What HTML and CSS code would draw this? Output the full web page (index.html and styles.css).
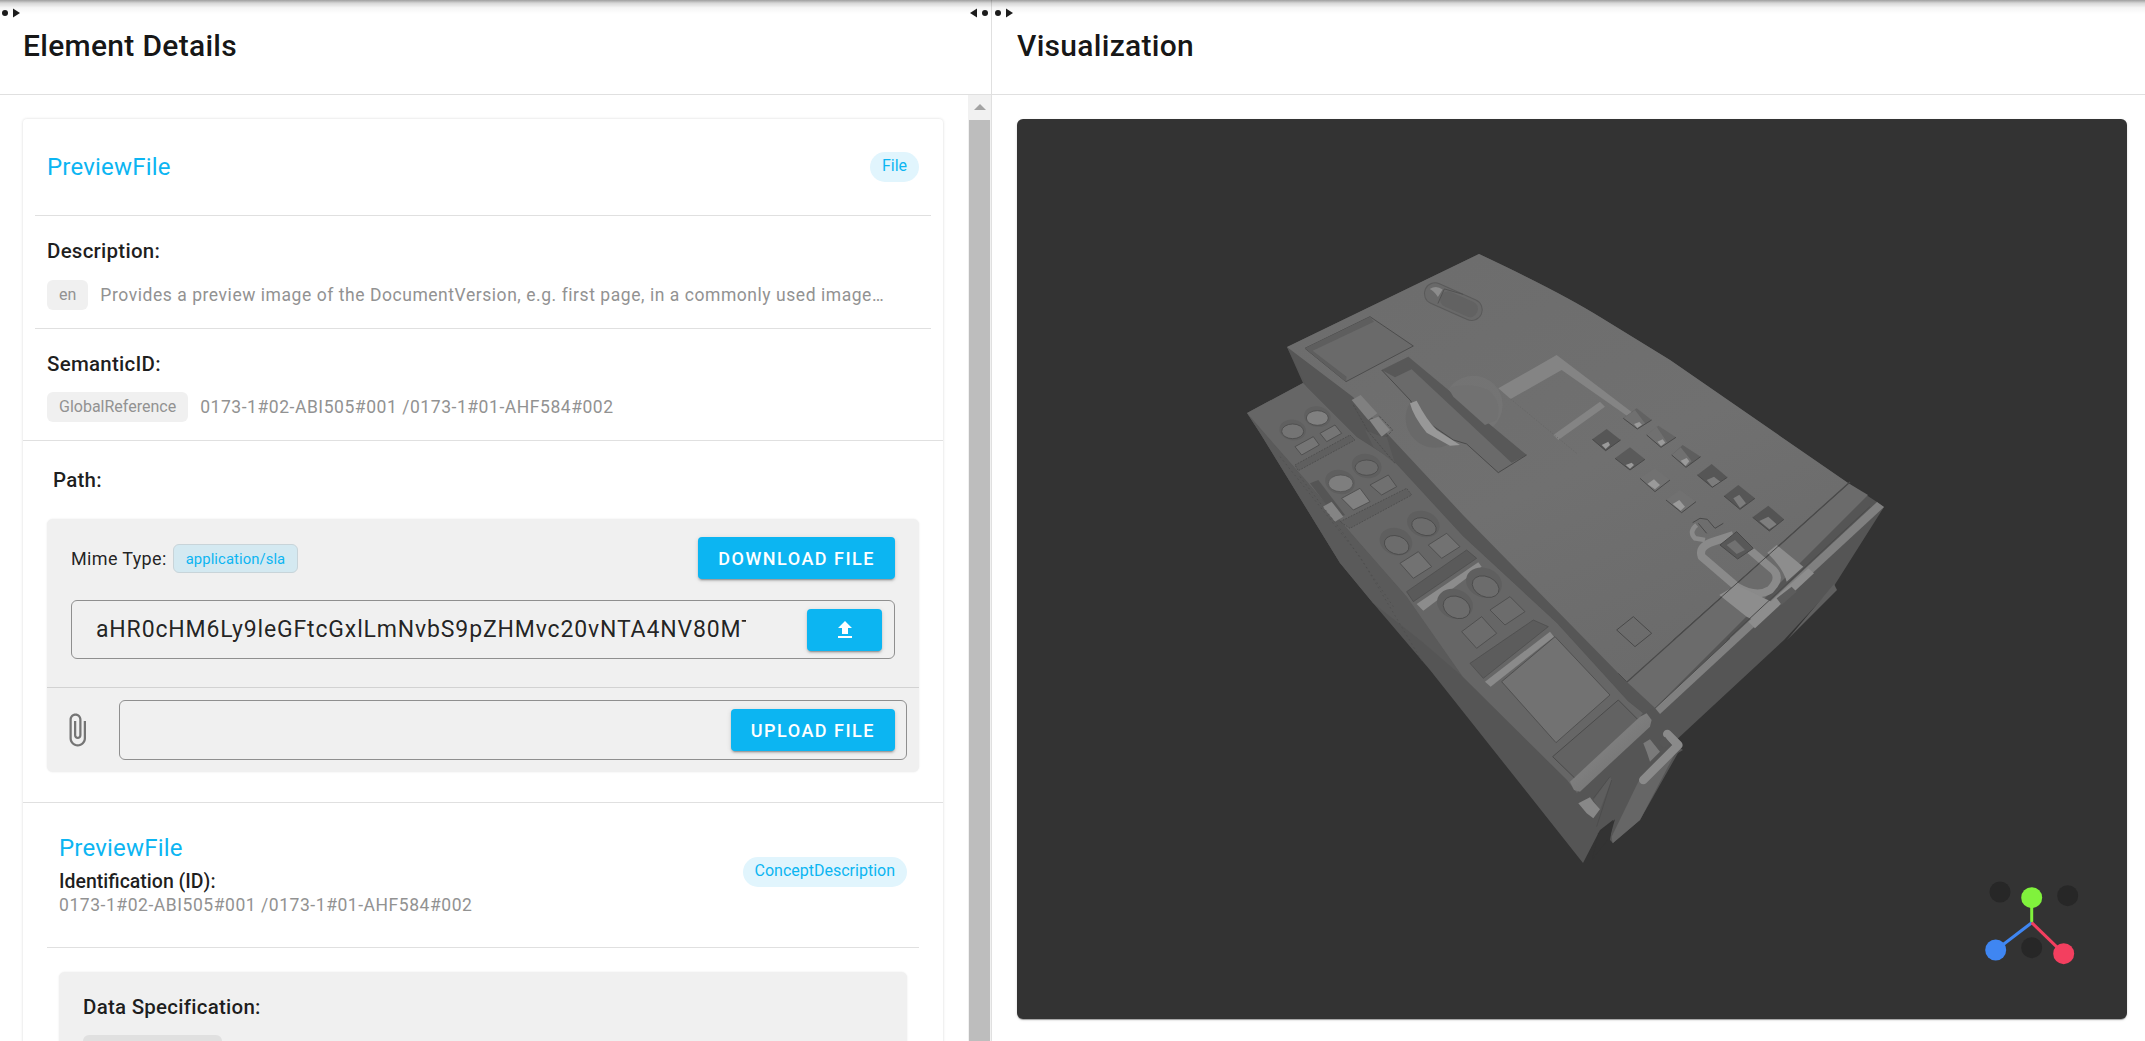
FILE: index.html
```html
<!DOCTYPE html>
<html lang="en">
<head>
<meta charset="utf-8">
<title>Element Details</title>
<link rel="stylesheet" href="styles.css">
</head>
<body>
<div class="topshade"></div>
<main class="app">
  <section class="panel panel-left">
    <header class="panel-head"><h1>Element Details</h1></header>
    <div class="left-body">
      <div class="scroller">
        <article class="card">
          <div class="card-head">
            <h2 class="title">PreviewFile</h2>
            <span class="pill">File</span>
          </div>
          <div class="field inset">
            <h3 class="label">Description:</h3>
            <div class="value-row">
              <span class="tag">en</span>
              <span class="muted ellipsis">Provides a preview image of the DocumentVersion, e.g. first page, in a commonly used image format and low resolution.</span>
            </div>
          </div>
          <div class="field inset">
            <h3 class="label">SemanticID:</h3>
            <div class="value-row">
              <span class="tag">GlobalReference</span>
              <span class="muted">0173-1#02-ABI505#001 /0173-1#01-AHF584#002</span>
            </div>
          </div>
          <div class="full-rule"></div>
          <div class="path-section">
            <h3 class="label path-label">Path:</h3>
            <div class="filebox">
              <div class="mime-row">
                <span class="mime-label">Mime Type:</span>
                <span class="mime-chip">application/sla</span>
                <button class="btn btn-push">DOWNLOAD FILE</button>
              </div>
              <div class="file-input">
                <span class="file-value">aHR0cHM6Ly9leGFtcGxlLmNvbS9pZHMvc20vNTA4NV80MT</span>
                <button class="btn btn-icon" aria-label="Upload">
                  <svg class="upload-icon" viewBox="0 0 24 24"><path d="M9 16h6v-6h4l-7-7-7 7h4zm-4 2h14v2H5z"/></svg>
                </button>
              </div>
              <div class="upload-row">
                <svg class="clip-icon" viewBox="0 0 24 24"><path d="M16.5 6v11.5c0 2.21-1.79 4-4 4s-4-1.79-4-4V5c0-1.38 1.12-2.5 2.5-2.5s2.5 1.12 2.5 2.5v10.5c0 .55-.45 1-1 1s-1-.45-1-1V6H10v9.5c0 1.38 1.12 2.5 2.5 2.5s2.5-1.12 2.5-2.5V5c0-2.21-1.79-4-4-4S7 2.79 7 5v12.5c0 3.04 2.46 5.5 5.5 5.5s5.5-2.46 5.5-5.5V6h-1.5z"/></svg>
                <div class="upload-input">
                  <button class="btn">UPLOAD FILE</button>
                </div>
              </div>
            </div>
          </div>
          <div class="full-rule"></div>
          <div class="concept">
            <div class="concept-head">
              <div>
                <h2 class="title">PreviewFile</h2>
                <h3 class="id-label">Identification (ID):</h3>
                <span class="muted id-value">0173-1#02-ABI505#001 /0173-1#01-AHF584#002</span>
              </div>
              <span class="pill">ConceptDescription</span>
            </div>
            <div class="specbox">
              <h3 class="label">Data Specification:</h3>
              <span class="spec-chip"></span>
            </div>
          </div>
        </article>
      </div>
      <div class="scrollbar">
        <div class="scroll-btn"><span class="scroll-arrow"></span></div>
        <div class="scroll-thumb"></div>
      </div>
    </div>
  </section>
  <section class="panel panel-right">
    <header class="panel-head"><h1>Visualization</h1></header>
    <div class="viewer">
      <svg class="scene" viewBox="1017 119 1110 900" xmlns="http://www.w3.org/2000/svg">
        <defs>
          <linearGradient id="rod" x1="0" y1="0" x2="1" y2="1">
            <stop offset="0" stop-color="#8c8c8c"/><stop offset="1" stop-color="#6c6c6c"/>
          </linearGradient>
          <linearGradient id="plate" x1="0" y1="0" x2="0.6" y2="1">
            <stop offset="0" stop-color="#6c6c6c"/><stop offset=".6" stop-color="#707070"/><stop offset="1" stop-color="#6b6b6b"/>
          </linearGradient>
        </defs>
        <!-- body silhouette -->
        <path fill="#555" d="M1479 254 Q1560 292 1600 317 L1670 360 L1848 483 L1877 502 L1884 507 L1834 586 L1784 640 L1673 743 L1683 750 L1678 753 L1640 820 L1613 843 L1610 840 L1613 820 L1600 830 L1583 863 L1430 670 L1373 603 L1340 563 L1260 433 L1247 413 L1303 383 L1287 347 Z"/>
        <path fill="#5f5f5f" d="M1837 590 L1834 584 L1787 640 Z"/>
        <!-- side face next to terminals -->
        <path fill="#5a5a5a" d="M1247 413 L1260 428 L1303 477 L1357 540 L1407 597 L1467 667 L1463 677 L1420 640 L1373 603 L1340 563 L1260 433 Z"/>
        <!-- terminal face -->
        <path fill="#666" d="M1247 413 L1303 383 L1307 387 L1357 437 L1393 460 L1463 536 L1557 623 L1628 701 L1643 713 L1577 793 L1567 780 L1463 677 L1407 597 L1357 540 L1303 477 L1260 428 Z"/>
        <!-- dark band -->
        <path fill="#565656" d="M1287 347 L1353 397 L1463 515 L1557 601 L1628 680 L1655 708 L1643 713 L1628 701 L1557 623 L1463 536 L1393 460 L1357 437 L1307 387 Z"/>
        <!-- top plate -->
        <path fill="url(#plate)" d="M1479 254 Q1560 292 1600 317 L1670 360 L1848 483 L1627 682 L1463 515 L1353 397 L1287 347 Z"/>
        <!-- lower strip -->
        <path fill="#6b6b6b" d="M1627 682 L1848 483 L1868 495 L1655 708 Z"/>
        <path fill="#808080" d="M1655 708 L1877 502 L1884 507 L1660 714 Z"/>
        <path fill="none" stroke="#4a4a4a" stroke-width="1.2" d="M1627 682 L1850 482"/>

        <!-- features from top-left of the plate -->
        <g transform="translate(1240 240) scale(.3333)">
          <path fill="#6a6a6a" stroke="#4c4c4c" stroke-width="3" d="M195 325 L390 230 L520 318 L318 425 Z"/>
          <path fill="#5e5e5e" d="M195 325 L390 230 L402 245 L218 332 Z M195 325 L218 332 L320 410 L318 425 Z"/>
          <!-- oval -->
          <g transform="translate(640 185) rotate(24)">
            <rect x="-92" y="-32" width="184" height="64" rx="32" fill="#696969" stroke="#5a5a5a" stroke-width="3"/>
            <rect x="-40" y="-24" width="118" height="48" rx="22" fill="#626262"/>
            <path fill="#8c8c8c" d="M-80 -6 Q-68 -26 -44 -20 L-48 6 Q-66 -6 -80 -6 Z"/>
            <path fill="none" stroke="#505050" stroke-width="2.5" d="M-40 24 L-40 -24 L18 -32"/>
          </g>
          <!-- spheres -->
          <circle cx="700" cy="495" r="88" fill="#777" opacity=".65"/>
          <circle cx="585" cy="535" r="88" fill="#696969"/>
          <!-- slot -->
          <path fill="#6a6a6a" d="M425 390 L505 350 L860 645 L775 698 L680 612 L640 600 L560 540 L510 480 Z"/>
          <path fill="#585858" d="M425 390 L505 350 L860 645 L815 668 L515 388 L465 412 Z"/>
          <path fill="none" stroke="#4a4a4a" stroke-width="3" d="M425 390 L510 480 Q545 530 560 545 L640 600 L680 612 L775 698 L860 645"/>
          <path fill="#989898" d="M510 490 L530 482 Q560 540 590 570 L660 615 L630 617 L560 578 Q520 530 510 490 Z"/>
          <path fill="#717171" d="M625 445 Q680 425 745 450 Q790 490 770 540 L735 555 L640 470 Z"/>
          <!-- frame -->
          <path fill="#848484" d="M775 445 L950 345 L1180 520 L1175 540 L1165 530 L965 390 L812 477 Z"/>
          <path fill="#848484" d="M1080 485 L1095 500 L955 600 L940 585 Z"/>
          <!-- dotted edge -->
          <path fill="none" stroke="#626262" stroke-width="2" stroke-dasharray="4 5" d="M812 477 L1010 640"/>
          <!-- small block at plate edge -->
          <path fill="#808080" d="M335 480 L362 465 L412 520 L385 540 Z"/>
          <path fill="#868686" d="M388 540 L415 530 L450 570 L425 590 Z"/>
          <path fill="#5c5c5c" d="M375 570 L425 590 L440 590 L465 670 L400 620 Z"/>
          <path fill="none" stroke="#4a4a4a" stroke-width="2.5" stroke-dasharray="7 4" d="M340 495 L385 575 L465 670 M440 590 L458 570 L415 525"/>
        </g>

        <!-- status squares and loop -->
        <g transform="translate(1560 360) scale(.3333)">
          <g>
            <path fill="#626262" d="M190 175 L230 145 L275 180 L232 207 Z"/>
            <path fill="#646464" d="M260 225 L295 197 L348 232 L303 262 Z"/>
            <path fill="#5e5e5e" d="M335 285 L368 255 L422 290 L378 322 Z"/>
            <path fill="#565656" d="M412 345 L455 312 L502 352 L457 382 Z"/>
            <path fill="#565656" d="M492 408 L535 375 L585 415 L540 448 Z"/>
            <path fill="#545454" d="M578 472 L625 437 L672 478 L628 513 Z"/>
            <path fill="#565656" d="M97 238 L140 207 L182 240 L137 272 Z"/>
            <path fill="#5a5a5a" d="M165 295 L210 262 L255 298 L210 330 Z"/>
            <path fill="#717171" d="M240 355 L285 325 L330 360 L285 395 Z"/>
            <path fill="#717171" d="M318 420 L360 390 L408 425 L365 458 Z"/>
          </g>
          <g fill="#707070">
            <path d="M190 175 L225 150 L255 190 L232 207 Z"/>
            <path d="M260 225 L290 200 L322 248 L303 262 Z"/>
            <path d="M335 285 L362 262 L395 303 L378 322 Z"/>
          </g>
          <g fill="#9a9a9a">
            <path d="M222 192 L238 186 L246 194 L232 204 Z"/>
            <path d="M292 245 L308 238 L316 248 L303 258 Z"/>
            <path d="M362 302 L380 294 L388 304 L376 318 Z"/>
            <path d="M125 255 L145 245 L150 255 L137 267 Z"/>
            <path d="M197 315 L215 308 L222 315 L210 326 Z"/>
            <path d="M262 372 L282 358 L300 375 L285 388 Z"/>
            <path d="M338 432 L358 420 L375 440 L362 452 Z"/>
            <path fill="#7c7c7c" d="M440 360 L462 350 L482 366 L457 380 Z"/>
            <path fill="#7c7c7c" d="M520 415 L538 404 L558 430 L540 444 Z"/>
            <path fill="#7e7e7e" d="M598 483 L625 470 L650 493 L628 508 Z"/>
          </g>
          <g fill="none" stroke="#484848" stroke-width="3">
            <path d="M190 175 L232 207 L275 180 M260 225 L303 262 L348 232 M335 285 L378 322 L422 290"/>
            <path d="M412 345 L457 382 L502 352 M492 408 L540 448 L585 415 M578 472 L628 513 L672 478"/>
            <path d="M97 238 L137 272 L182 240 M165 295 L210 330 L255 298"/>
            <path d="M240 355 L285 395 L330 360 M318 420 L365 458 L408 425"/>
            <path d="M398 488 L420 475 L442 478 L465 505 L490 490 M415 490 L440 520"/>
            <path d="M170 810 L220 770 L275 820 L225 860 Z"/>
          </g>
          <!-- loop -->
          <path fill="none" stroke="#8a8a8a" stroke-width="14" d="M410 495 Q385 515 405 535 L435 540"/>
          <path fill="none" stroke="#8a8a8a" stroke-width="24" stroke-linejoin="round" d="M520 525 L460 545 Q415 560 425 590 L530 680 Q590 715 630 690 Q665 655 640 630 L570 570"/>
          <path fill="#8d8d8d" d="M478 705 L530 675 L655 735 L640 745 L600 790 L560 770 Z"/>
          <path fill="#8d8d8d" d="M622 578 L650 555 L730 620 L680 665 Q670 625 622 578 Z"/>
          <path fill="#8d8d8d" d="M565 785 L745 625 L762 640 L585 805 Z"/>
          <path fill="#5c5c5c" d="M650 715 L695 680 L710 695 L665 735 Z"/>
          <path fill="#585858" stroke="#484848" stroke-width="3" d="M480 555 L530 515 L580 565 L533 597 Z"/>
          <path fill="#717171" d="M500 555 L525 540 L555 570 L530 582 Z"/>
          <path fill="none" stroke="#4a4a4a" stroke-width="3" d="M340 840 L864 372 M500 840 L930 440"/>
        </g>

        <!-- terminals -->
        <g transform="translate(1260 400) scale(.3333)" class="terminals">
          <!-- block 1 -->
          <ellipse cx="98" cy="90" rx="40" ry="31" transform="rotate(10 98 90)" fill="#606060"/>
          <ellipse cx="172" cy="50" rx="40" ry="31" transform="rotate(10 172 50)" fill="#606060"/>
          <ellipse cx="98" cy="94" rx="33" ry="22" fill="#747474" stroke="#4a4a4a" stroke-width="2.5"/>
          <ellipse cx="172" cy="54" rx="33" ry="22" fill="#808080" stroke="#4a4a4a" stroke-width="2.5"/>
          <path fill="#757575" stroke="#4a4a4a" stroke-width="2.5" d="M105 140 L160 110 L178 135 L125 165 Z"/>
          <path fill="#757575" stroke="#4a4a4a" stroke-width="2.5" d="M180 100 L225 75 L245 100 L200 125 Z"/>
          <path fill="#5f5f5f" stroke="#4a4a4a" stroke-width="2.5" stroke-dasharray="5 4" d="M105 195 L270 105 L285 120 L115 212 Z"/>
          <!-- block 2 -->
          <ellipse cx="240" cy="246" rx="45" ry="36" transform="rotate(15 240 246)" fill="#5f5f5f"/>
          <ellipse cx="320" cy="198" rx="45" ry="36" transform="rotate(15 320 198)" fill="#5f5f5f"/>
          <ellipse cx="242" cy="250" rx="37" ry="25" fill="#7e7e7e" stroke="#4e4e4e" stroke-width="2"/>
          <ellipse cx="320" cy="203" rx="35" ry="23" fill="#6c6c6c" stroke="#4a4a4a" stroke-width="2.5"/>
          <path fill="#808080" stroke="#4a4a4a" stroke-width="2.5" d="M245 295 L300 265 L330 305 L280 330 Z"/>
          <path fill="#707070" stroke="#4a4a4a" stroke-width="2.5" d="M330 255 L385 225 L410 260 L365 285 Z"/>
          <path fill="#5f5f5f" stroke="#4a4a4a" stroke-width="2.5" stroke-dasharray="5 4" d="M240 365 L440 265 L455 285 L270 385 Z"/>
          <path fill="#555" d="M150 250 L175 240 L255 345 L230 355 Z"/>
          <path fill="#848484" d="M188 320 L215 305 L250 350 L225 365 Z"/>
          <!-- block 3 -->
          <ellipse cx="408" cy="425" rx="50" ry="40" transform="rotate(20 408 425)" fill="#5f5f5f"/>
          <ellipse cx="490" cy="372" rx="50" ry="38" transform="rotate(20 490 372)" fill="#5f5f5f"/>
          <ellipse cx="410" cy="435" rx="38" ry="27" transform="rotate(20 410 435)" fill="#6c6c6c" stroke="#4a4a4a" stroke-width="2.5"/>
          <ellipse cx="492" cy="380" rx="38" ry="25" transform="rotate(20 492 380)" fill="#6c6c6c" stroke="#4a4a4a" stroke-width="2.5"/>
          <path fill="#727272" stroke="#4a4a4a" stroke-width="2.5" d="M420 490 L475 455 L515 500 L460 535 Z"/>
          <path fill="#727272" stroke="#4a4a4a" stroke-width="2.5" d="M505 435 L560 400 L600 440 L545 475 Z"/>
          <path fill="#5a5a5a" stroke="#4a4a4a" stroke-width="2" d="M440 575 L620 450 L650 475 L460 605 Z"/>
          <!-- light strip -->
          <path fill="#8c8c8c" d="M470 612 L655 487 L665 500 L490 632 Z"/>
          <!-- block 4 -->
          <ellipse cx="585" cy="612" rx="55" ry="44" transform="rotate(20 585 612)" fill="#5f5f5f"/>
          <ellipse cx="672" cy="548" rx="55" ry="44" transform="rotate(20 672 548)" fill="#5f5f5f"/>
          <ellipse cx="590" cy="622" rx="42" ry="32" transform="rotate(25 590 622)" fill="#6c6c6c" stroke="#4a4a4a" stroke-width="2.5"/>
          <ellipse cx="677" cy="560" rx="42" ry="30" transform="rotate(25 677 560)" fill="#6c6c6c" stroke="#4a4a4a" stroke-width="2.5"/>
          <path fill="#6c6c6c" stroke="#4a4a4a" stroke-width="2.5" d="M605 695 L665 650 L710 700 L650 745 Z"/>
          <path fill="#6c6c6c" stroke="#4a4a4a" stroke-width="2.5" d="M690 630 L750 590 L795 635 L735 675 Z"/>
          <path fill="none" stroke="#4c4c4c" stroke-width="2" stroke-dasharray="5 9" d="M60 170 L300 470 L490 790 M120 230 L250 400 L400 620"/>
        </g>

        <!-- front module, clips -->
        <g transform="translate(1430 620) scale(.3333)">
          <path fill="#5c5c5c" stroke="#4a4a4a" stroke-width="2" d="M120 130 L310 0 L355 20 L160 175 Z"/>
          <path fill="#727272" stroke="#4a4a4a" stroke-width="2.5" d="M215 185 L375 50 L540 225 L378 368 Z"/>
          <path fill="#8a8a8a" d="M165 185 L360 35 L372 50 L182 200 Z"/>
          <path fill="#626262" stroke="#4a4a4a" stroke-width="3" d="M368 410 L565 240 L625 300 L435 475 Z"/>
          <path fill="url(#rod)" d="M420 485 L630 290 L650 280 L665 300 L660 320 L450 515 L432 510 Z"/>
          <path fill="none" stroke="#4a4a4a" stroke-width="3" d="M590 185 L565 160 M675 265 L900 55"/>
          <path fill="none" stroke="#808080" stroke-width="3" d="M688 262 L900 62"/>
          <!-- left clip -->
          <path fill="#5e5e5e" d="M490 540 L540 470 L545 480 L510 570 Z"/>
          <path fill="#888" d="M445 550 L480 532 L490 545 L510 568 L490 595 L470 580 Z"/>
          <path fill="none" stroke="#484848" stroke-width="2" d="M540 470 L490 535 M545 480 L500 620"/>
          <!-- gap between clips -->
          <path fill="#333" d="M505 640 L555 598 L540 650 L486 720 Z"/>
          <!-- right clip -->
          <path fill="#666" d="M625 485 L738 395 L630 600 L548 670 L545 650 Z"/>
          <path fill="#7a7a7a" d="M640 370 L660 358 L690 395 L660 425 L650 395 Z"/>
          <path fill="none" stroke="#8a8a8a" stroke-width="26" stroke-linecap="round" stroke-linejoin="round" d="M712 342 L745 375 L640 480"/>
          <path fill="#565656" d="M685 365 L705 350 L722 372 L700 385 Z"/>
        </g>

        <!-- axis gizmo -->
        <g class="gizmo">
          <circle cx="2000" cy="892" r="10.5" fill="#272727"/>
          <circle cx="2067.7" cy="895.7" r="10.5" fill="#272727"/>
          <circle cx="2031.7" cy="947.7" r="10.5" fill="#272727"/>
          <path stroke="#80f23c" stroke-width="3" d="M2031.7 922.7 V897"/>
          <path stroke="#3f86f2" stroke-width="3" d="M2031.7 922.7 L1996 950"/>
          <path stroke="#f33f5f" stroke-width="3" d="M2031.7 922.7 L2063.7 953.7"/>
          <circle cx="2031.7" cy="897.7" r="10.5" fill="#80f23c"/>
          <circle cx="1995.7" cy="950" r="10.5" fill="#3f86f2"/>
          <circle cx="2063.7" cy="953.7" r="10.5" fill="#f33f5f"/>
        </g>
      </svg>
    </div>
  </section>
</main>
<svg class="handle handle-a" viewBox="0 0 20 10"><circle cx="5" cy="5" r="3"/><path d="M13 .5 L20 5 L13 9.5Z"/></svg>
<svg class="handle handle-b" viewBox="0 0 43 10"><path d="M7 .5 L0 5 L7 9.5Z"/><circle cx="15" cy="5" r="3"/><circle cx="28" cy="5" r="3"/><path d="M36 .5 L43 5 L36 9.5Z"/></svg>
</body>
</html>
```

FILE: styles.css
```css
* { box-sizing: border-box; }
html, body { margin: 0; height: 100%; overflow: hidden; background: #fff; }
body { font-family: Roboto, "Noto Sans", sans-serif; color: rgba(0,0,0,.87); }
h1, h2, h3 { margin: 0; }

.topshade {
  position: absolute; left: 0; right: 0; top: 0; height: 14px; z-index: 2; pointer-events: none;
  background: linear-gradient(to bottom, rgba(0,0,0,.38), rgba(0,0,0,.16) 22%, rgba(0,0,0,.04) 55%, rgba(0,0,0,0));
}
.handle { position: absolute; top: 8px; height: 10px; z-index: 3; fill: #1c1c1c; }
.handle-a { left: 0; width: 20px; }
.handle-b { left: 970px; width: 43px; }

.app { display: flex; height: 1041px; }
.panel { display: flex; flex-direction: column; height: 100%; }
.panel-left { width: 992px; border-right: 1px solid #e0e0e0; flex: none; }
.panel-right { flex: 1; min-width: 0; }
.panel-head {
  height: 95px; flex: none; border-bottom: 1px solid #e0e0e0;
  display: flex; align-items: center; padding: 0 0 3px 23px;
}
.panel-right .panel-head { padding-left: 25px; }
.panel-head h1 { font-size: 30px; font-weight: 500; line-height: 1.2; letter-spacing: .3px; color: rgba(0,0,0,.92); }

.left-body { display: flex; flex: 1; min-height: 0; overflow: hidden; }
.scroller { width: 968px; flex: none; padding: 24px 25px 0 23px; overflow: hidden; }
.scrollbar { width: 23px; flex: none; display: flex; flex-direction: column; background: #f1f1f1; }
.scroll-btn { height: 25px; flex: none; display: flex; justify-content: center; padding-top: 9px; }
.scroll-arrow { width: 0; height: 0; border-left: 6px solid transparent; border-right: 6px solid transparent; border-bottom: 6px solid #a3a3a3; }
.scroll-thumb { flex: 1; margin: 0 1px; background: #bdbdbd; }

.card { width: 920px; background: #fff; border-radius: 4px; box-shadow: 0 0 3px rgba(0,0,0,.16); padding-bottom: 40px; }
.card-head {
  height: 97px; margin: 0 12px; padding: 0 12px; border-bottom: 1px solid #e0e0e0;
  display: flex; align-items: center; justify-content: space-between;
}
.title { font-size: 24px; font-weight: 400; line-height: 30px; letter-spacing: .2px; color: #0cb5f2; }
.pill {
  height: 30px; padding: 0 12px; border-radius: 15px; background: #e1f5fd; color: #0cb5f2;
  font-size: 16px; line-height: 28px; flex: none;
}
.label { font-size: 20.5px; font-weight: 500; line-height: 22px; letter-spacing: .25px; color: rgba(0,0,0,.88); }
.field { margin: 0 12px; padding: 24px 12px 18px; border-bottom: 1px solid #e0e0e0; }
.field:nth-of-type(3) { border-bottom: 0; padding-bottom: 18px; }
.value-row { display: flex; align-items: center; gap: 12px; margin-top: 17px; height: 30px; }
.field:nth-of-type(2) .value-row { margin-top: 18px; }
.tag {
  height: 30px; padding: 0 12px; border-radius: 6px; background: #f0f0f0; color: #929292;
  font-size: 16px; line-height: 30px; flex: none;
}
.muted { font-size: 17.5px; color: #929292; letter-spacing: .55px; }
.ellipsis { display: block; width: 784px; white-space: nowrap; overflow: hidden; text-overflow: ellipsis; }
.full-rule { height: 1px; background: #e0e0e0; }

.path-section { padding: 28px 24px 30px; }
.path-label { padding-left: 6px; }
.filebox { margin-top: 28px; background: #f0f0f0; border-radius: 6px; height: 253px; box-shadow: 0 0 2px rgba(0,0,0,.1); }
.mime-row { display: flex; align-items: center; padding: 18px 24px 0; }
.mime-label { font-size: 18px; letter-spacing: .35px; }
.mime-chip {
  margin-left: 6px; height: 29px; padding: 0 12px; border-radius: 6px; border: 1px solid #c8d4d9;
  background: #d4e9f1; color: #0cb5f2; font-size: 14.8px; line-height: 28px; letter-spacing: .1px;
}
.btn {
  height: 42px; padding: 0 20px; border: 0; border-radius: 4px; background: #0cb5f2; color: #fff;
  font-family: inherit; font-size: 18px; font-weight: 500; letter-spacing: 1.5px; white-space: nowrap;
  box-shadow: 0 3px 1px -2px rgba(0,0,0,.2), 0 2px 2px rgba(0,0,0,.14), 0 1px 5px rgba(0,0,0,.12);
}
.btn-push { margin-left: auto; }
.btn-icon { width: 75px; padding: 0; display: flex; align-items: center; justify-content: center; margin-left: auto; }
.upload-icon { width: 24px; height: 24px; fill: #fff; }
.file-input {
  margin: 21px 24px 0; height: 59px; padding: 0 12px 0 24px; border: 1px solid #8f8f8f; border-radius: 6px;
  display: flex; align-items: center;
}
.file-value { display: block; width: 650px; overflow: hidden; white-space: nowrap; font-size: 23px; letter-spacing: .85px; }
.upload-row {
  margin-top: 28px; height: 85px; border-top: 1px solid #d2d2d2;
  display: flex; align-items: center; padding: 12px;
}
.clip-icon { width: 36px; height: 36px; fill: #757575; flex: none; }
.upload-input {
  margin-left: 24px; flex: 1; height: 60px; border: 1px solid #8f8f8f; border-radius: 6px;
  display: flex; align-items: center; justify-content: flex-end; padding-right: 11px;
}

.concept { padding: 30px 24px 0; }
.concept-head {
  display: flex; align-items: center; justify-content: space-between;
  padding: 0 12px 32px; border-bottom: 1px solid #e0e0e0;
}
.concept-head .pill { margin-bottom: 4px; }
.id-label { margin-top: 8px; font-size: 19.5px; font-weight: 500; line-height: 21px; color: rgba(0,0,0,.88); }
.id-value { display: block; margin-top: 3px; line-height: 20px; }
.specbox { margin: 24px 12px 0; background: #f0f0f0; border-radius: 6px; height: 300px; padding: 24px; box-shadow: 0 0 2px rgba(0,0,0,.1); }
.spec-chip { display: block; margin-top: 17px; width: 139px; height: 30px; border-radius: 6px; background: #e0e0e0; }

.viewer { flex: 1; padding: 24px 18px 22px 25px; min-height: 0; }
.scene {
  display: block; width: 1110px; height: 900px; background: #333; border-radius: 6px;
  box-shadow: 0 2px 1px -1px rgba(0,0,0,.2), 0 1px 1px rgba(0,0,0,.14), 0 1px 3px rgba(0,0,0,.12);
}
```
